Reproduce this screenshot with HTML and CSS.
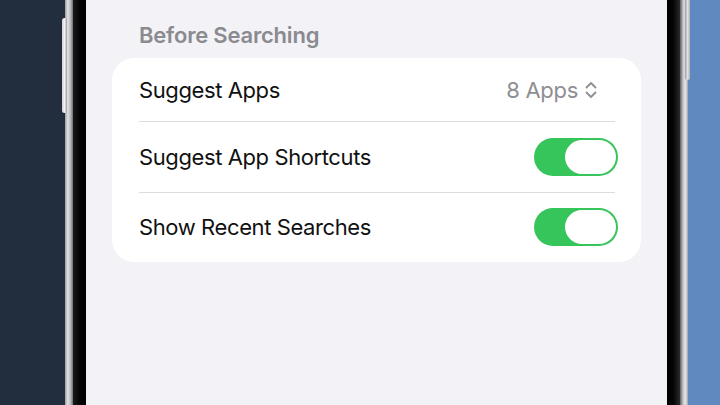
FILE: index.html
```html
<!DOCTYPE html>
<html>
<head>
<meta charset="utf-8">
<link rel="stylesheet" href="styles.css">
</head>
<body>
<div class="scene">
  <div class="bg-left"></div>
  <div class="frame-silver frame-left"></div>
  <div class="bezel"></div>
  <div class="screen">
    <div class="section-title">Before Searching</div>
    <div class="card">
      <div class="row row-first">
        <span class="label">Suggest Apps</span>
        <span class="value">8 Apps
          <svg class="chev" width="14" height="18" viewBox="0 0 14 18"><path d="M2.5 6.5 L7 2 L11.5 6.5 M2.5 11.5 L7 16 L11.5 11.5" fill="none" stroke="#8e8e93" stroke-width="1.8" stroke-linecap="round" stroke-linejoin="round"/></svg>
        </span>
      </div>
      <div class="sep"></div>
      <div class="row">
        <span class="label">Suggest App Shortcuts</span>
        <span class="toggle"><span class="knob"></span></span>
      </div>
      <div class="sep"></div>
      <div class="row">
        <span class="label">Show Recent Searches</span>
        <span class="toggle"><span class="knob"></span></span>
      </div>
    </div>
  </div>
  <div class="bezel bezel-right"></div>
  <div class="frame-silver frame-right"></div>
  <div class="bg-right"></div>
  <div class="btn btn-left"></div>
  <div class="btn btn-right"></div>
</div>
</body>
</html>
```

FILE: styles.css
```css
html, body {
  margin: 0;
  padding: 0;
}
body {
  width: 720px;
  height: 405px;
  overflow: hidden;
  font-family: Inter, "Noto Sans", "Liberation Sans", sans-serif;
}
.scene {
  position: relative;
  display: flex;
  width: 720px;
  height: 405px;
}
.bg-left {
  width: 65px;
  background: #222d3d;
}
.bg-right {
  flex: 1;
  background: #6089c0;
}
.frame-silver {
  width: 8px;
}
.frame-left {
  background: linear-gradient(90deg, #9a9ca0 0%, #e2e2e4 35%, #b4b5b8 70%, #6a6b6e 100%);
}
.frame-right {
  background: linear-gradient(90deg, #5a5b5e 0%, #c9cacd 40%, #e4e4e6 70%, #a0a2a6 100%);
}
.bezel {
  width: 13px;
  background: linear-gradient(90deg, #1a1a1a 0%, #050505 50%, #000 100%);
}
.bezel-right {
  background: linear-gradient(90deg, #000 0%, #050505 50%, #2a2a2a 100%);
}
.screen {
  width: 581px;
  background: #f2f2f7;
  padding: 0 26px;
  box-sizing: border-box;
}
.section-title {
  padding: 21px 0 0 27px;
  height: 37px;
  box-sizing: border-box;
  font-size: 22px;
  line-height: 28px;
  font-weight: 600;
  color: #8a8a8f;
  letter-spacing: -0.2px;
}
.card {
  background: #ffffff;
  border-radius: 22px;
  margin-top: 21px;
  height: 204px;
  display: flex;
  flex-direction: column;
}
.row {
  height: 70px;
  display: flex;
  align-items: center;
  justify-content: space-between;
  padding: 0 23px 0 27px;
}
.row-first {
  height: 64px;
  padding-right: 43px;
}
.label {
  font-size: 22px;
  color: #111111;
  letter-spacing: -0.4px;
}
.value {
  display: flex;
  align-items: center;
  gap: 6px;
  font-size: 22px;
  color: #8e8e93;
  letter-spacing: -0.3px;
}
.chev {
  display: block;
}
.sep {
  height: 1px;
  background: #dcdce0;
  margin: 0 26px 0 27px;
}
.toggle {
  position: relative;
  width: 84px;
  height: 38px;
  border-radius: 19px;
  background: #36c55a;
  box-sizing: border-box;
}
.knob {
  position: absolute;
  top: 2px;
  right: 2px;
  width: 51px;
  height: 34px;
  border-radius: 17px;
  background: #ffffff;
}
.btn {
  position: absolute;
  border-radius: 3px;
}
.btn-left {
  left: 62px;
  top: 18px;
  width: 5px;
  height: 95px;
  background: linear-gradient(90deg, #d0d0d2, #f2f2f3 50%, #9a9ca0);
}
.btn-right {
  left: 685px;
  top: -4px;
  width: 5px;
  height: 84px;
  background: linear-gradient(90deg, #9a9ca0, #e0e0e2 50%, #b0b2b6);
}
```
